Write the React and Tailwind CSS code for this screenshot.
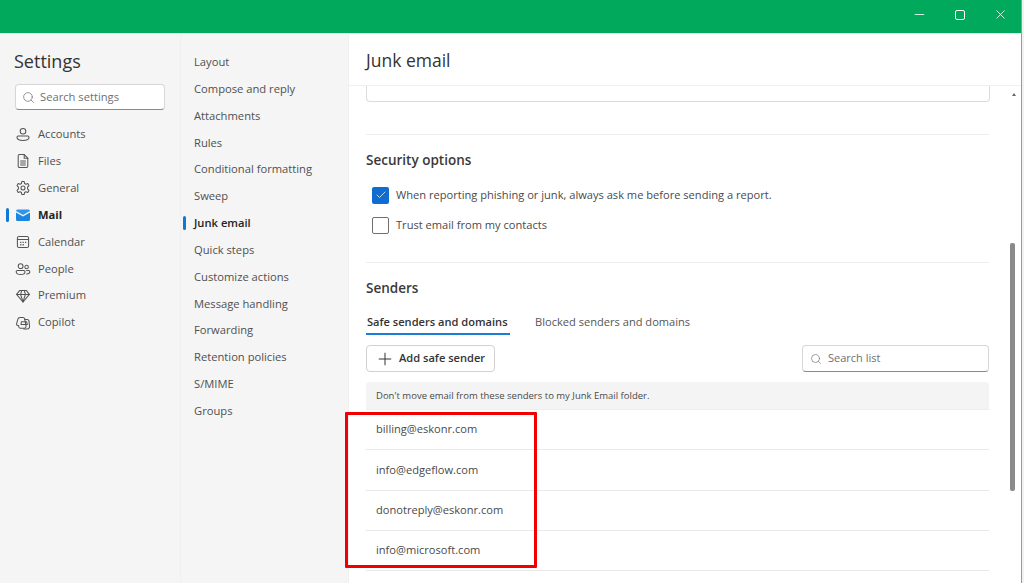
import { Search, Plus, Check, Minus, X } from 'lucide-react';

const accounts = [
  { name: 'Accounts', icon: <g><circle cx="10" cy="6.500" r="3.500" /><path d="M4 12.500h12a1.500 1.500 0 0 1 1.500 1.500c0 2.700-3 4-7.500 4s-7.500-1.300-7.500-4A1.500 1.500 0 0 1 4 12.500z" /></g> },
  { name: 'Files', icon: <g><path d="M5.500 2h6l4.500 4.500V16.500A1.500 1.500 0 0 1 14.500 18h-9A1.500 1.500 0 0 1 4 16.500v-13A1.500 1.500 0 0 1 5.500 2z" /><path d="M11.500 2V6.500H16M7 10h6M7 12.500h6M7 15h6" /></g> },
  { name: 'General', icon: <g><circle cx="10" cy="10" r="2.500" /><path d="M8.500 2h3l.5 2.400 1.600.9 2.400-.8 1.500 2.600-1.800 1.700v2.400l1.800 1.700-1.500 2.600-2.400-.8-1.600.9-.5 2.400h-3l-.5-2.400-1.600-.9-2.400.8-1.500-2.600 1.800-1.700V8.800L2.500 7.100 4 4.500l2.400.8 1.600-.9z" /></g> },
  { name: 'Mail', active: true },
  { name: 'Calendar', icon: <g><rect x="3" y="3" width="14" height="14" rx="2" /><path d="M3 7h14" /><path d="M6.500 10.500h1.500M9.500 10.500h1.500M12.500 10.500h1.500M6.500 13.500h1.500M9.500 13.500h1.500" strokeWidth="1.800" strokeLinecap="butt" /></g> },
  { name: 'People', icon: <g><circle cx="7" cy="6.500" r="3" /><path d="M3 12h8a1.500 1.500 0 0 1 1.500 1.500c0 2.200-2.200 3.500-5.500 3.500s-5.500-1.300-5.500-3.500A1.500 1.500 0 0 1 3 12z" /><circle cx="14.500" cy="7.500" r="2.200" /><path d="M14.500 12H17a1.500 1.500 0 0 1 1.500 1.500c0 1.700-1.500 2.700-4 2.700" /></g> },
  { name: 'Premium', icon: <g><path d="M6 3h8l4 5-8 9.500L2 8z" /><path d="M2 8h16M7 8l3 9.500L13 8M7 8l1.500-5M13 8l-1.500-5" /></g> },
  { name: 'Copilot', icon: <g><path d="M6.500 3h3.500a2 2 0 0 1 2 1.600l1.800 9a2.500 2.500 0 0 1-2.400 3H7a2.500 2.500 0 0 1-2.400-3l-.1-.6H3.500C2.400 13 1.700 12 2 10.800l1.500-5.300a3 3 0 0 1 3-2.500z" /><path d="M12.300 5.500H15a2.500 2.500 0 0 1 2.500 2.500l.7 6a3 3 0 0 1-3 3.500H11" /><path d="M8 8.500h6.500l1 3.500H7.500z" /></g> },
];

const submenu = ['Layout', 'Compose and reply', 'Attachments', 'Rules', 'Conditional formatting', 'Sweep', 'Junk email', 'Quick steps', 'Customize actions', 'Message handling', 'Forwarding', 'Retention policies', 'S/MIME', 'Groups'];

const senders = ['billing@eskonr.com', 'info@edgeflow.com', 'donotreply@eskonr.com', 'info@microsoft.com'];

export default function App() {
  return (
    <div className="relative h-[583px] w-[1024px] overflow-hidden bg-white font-['Open_Sans','Noto_Sans',sans-serif] text-[#424242]">
      {/* title bar */}
      <div className="flex h-[33px] items-center justify-end bg-[#00a95c] pb-[4px] pr-[16px] text-white">
        <Minus size={15} strokeWidth={1.300} className="mr-[28px]" />
        <div className="mr-[28px] h-[10px] w-[10px] rounded-[2px] border border-white" />
        <X size={15} strokeWidth={1.300} />
      </div>
      <div className="h-px bg-[#d9f2e6]" />

      <div className="flex h-[549px]">
        {/* left nav */}
        <div className="w-[181px] shrink-0 border-r border-[#f0f0f0] bg-[#f5f5f5]">
          <div className="pl-[14px] pt-[14px] text-[18px] font-medium leading-[26px] text-[#333]">Settings</div>
          <div className="ml-[15px] mt-[10px] flex h-[26px] w-[150px] items-center rounded-[4px] border border-[#d6d6d6] border-b-[#8a8a8a] bg-white pl-[6px] text-[11.200px] text-[#707070]">
            <Search size={13} strokeWidth={1.400} className="mr-[5px] text-[#777]" />
            Search settings
          </div>
          <div className="mt-[11px]">
            {accounts.map(a => (
              <div key={a.name} className="relative flex h-[26.900px] items-center pl-[15px]">
                {a.active && <div className="absolute left-[6px] top-[6px] h-[14px] w-[3px] rounded-[2px] bg-[#0f78d4]" />}
                {a.active ? (
                  <svg width="16" height="16" viewBox="0 0 16 16" className="mr-[7px]">
                    <path d="M1 5.500 8 9.500l7-4V12.500A1.500 1.500 0 0 1 13.500 14h-11A1.500 1.500 0 0 1 1 12.500z" fill="#1a86e0" />
                    <path d="M1 4A1.500 1.500 0 0 1 2.500 2.500h11A1.500 1.500 0 0 1 15 4L8 8z" fill="#2f96ea" />
                  </svg>
                ) : (
                  <svg width="16" height="16" viewBox="0 0 20 20" fill="none" stroke="#555" strokeWidth="1.300" strokeLinejoin="round" strokeLinecap="round" className="mr-[7px]">{a.icon}</svg>
                )}
                <span className={a.active ? 'text-[11.200px] font-bold text-[#242424]' : 'text-[11.200px] text-[#505050]'}>{a.name}</span>
              </div>
            ))}
          </div>
        </div>

        {/* sub nav */}
        <div className="w-[168px] shrink-0 border-r border-[#f0f0f0] bg-[#f5f5f5] pt-[15px]">
          {submenu.map(s => (
            <div key={s} className="relative flex h-[26.850px] items-center pl-[13px]">
              {s === 'Junk email' && <div className="absolute left-[2px] top-[6px] h-[14px] w-[3px] rounded-[2px] bg-[#0f78d4]" />}
              <span className={s === 'Junk email' ? 'text-[11.200px] font-semibold text-[#242424]' : 'text-[11.200px] text-[#505050]'}>{s}</span>
            </div>
          ))}
        </div>

        {/* content */}
        <div className="flex-1 min-w-0">
          <div className="flex h-[52px] items-center border-b border-[#f0f0f0] pl-[17px] pt-[2px] text-[17.500px] font-medium text-[#333]">Junk email</div>

          <div className="relative flex">
            <div className="w-[640px] pl-[17px]">
              <div className="-mr-px h-[16px] rounded-b-[4px] border border-t-0 border-[#dcdcdc]" />
              <div className="mt-[32px] border-t border-[#eeeeee] pt-[16px]">
                <div className="text-[13.500px] font-semibold leading-[19px] text-[#3a3a3a]">Security options</div>
                <div className="mt-[10px] flex h-[30px] items-center pl-[6px]">
                  <div className="mr-[7px] flex h-[17px] w-[17px] items-center justify-center rounded-[2px] bg-[#0f6cd0]">
                    <Check size={12} strokeWidth={1.500} className="text-white" />
                  </div>
                  <span className="text-[11.100px] text-[#4a4a4a]">When reporting phishing or junk, always ask me before sending a report.</span>
                </div>
                <div className="flex h-[30px] items-center pl-[6px]">
                  <div className="mr-[7px] h-[17px] w-[17px] rounded-[2px] border border-[#6f6f6f]" />
                  <span className="text-[11.100px] text-[#4a4a4a]">Trust email from my contacts</span>
                </div>
              </div>

              <div className="mt-[22px] border-t border-[#eeeeee] pt-[16px]">
                <div className="text-[13.500px] font-semibold leading-[19px] text-[#3a3a3a]">Senders</div>
                <div className="mt-[16px] flex whitespace-nowrap text-[11.100px]">
                  <div className="h-[21px] w-[144px] border-b-2 border-[#1a7fd4] pl-[1px] font-semibold leading-[16px] text-[#333]">Safe senders and domains</div>
                  <div className="ml-[25px] leading-[16px] text-[#555]">Blocked senders and domains</div>
                </div>
                <div className="mt-[10px] flex items-center justify-between">
                  <div className="flex h-[27px] w-[129px] items-center rounded-[4px] border border-[#d1d1d1] pl-[8px] text-[11.100px] font-semibold text-[#333]">
                    <Plus size={20} strokeWidth={1.200} className="mr-[4px]" />
                    Add safe sender
                  </div>
                  <div className="flex h-[27px] w-[187px] items-center rounded-[4px] border border-[#d6d6d6] border-b-[#8a8a8a] pl-[7px] text-[11px] text-[#707070]">
                    <Search size={12} strokeWidth={1.400} className="mr-[6px] text-[#777]" />
                    Search list
                  </div>
                </div>
                <div className="mt-[10px] flex h-[28px] items-center rounded-t-[3px] border-b border-[#eeeeee] bg-[#f4f4f4] pl-[10px] pt-[1px] text-[9.500px] text-[#4a4a4a]">Don't move email from these senders to my Junk Email folder.</div>
                {senders.map(s => (
                  <div key={s} className="flex h-[40.250px] items-center border-b border-[#e9e9e9] pl-[10px] text-[11.100px] text-[#4a4a4a]">{s}</div>
                ))}
              </div>
            </div>
            {/* scrollbar */}
            <div className="relative ml-[21px] w-[6px]">
              <div className="absolute left-[2px] top-[7px] h-0 w-0 border-x-[2px] border-b-[3px] border-x-transparent border-b-[#666]" />
              <div className="absolute left-0 top-[157px] h-[248px] w-[5px] rounded-[2px] bg-[#8a8a8a]" />
            </div>
          </div>
        </div>
      </div>

      {/* window edge */}
      <div className="absolute right-0 top-0 h-full w-[3px] border-l border-[#9a9a9a] bg-[#f2f2f2]" />
      {/* red annotation */}
      <div className="absolute left-[345px] top-[412px] h-[156px] w-[192px] rounded-[1px] border-[3px] border-[#f00000]" />
    </div>
  );
}
